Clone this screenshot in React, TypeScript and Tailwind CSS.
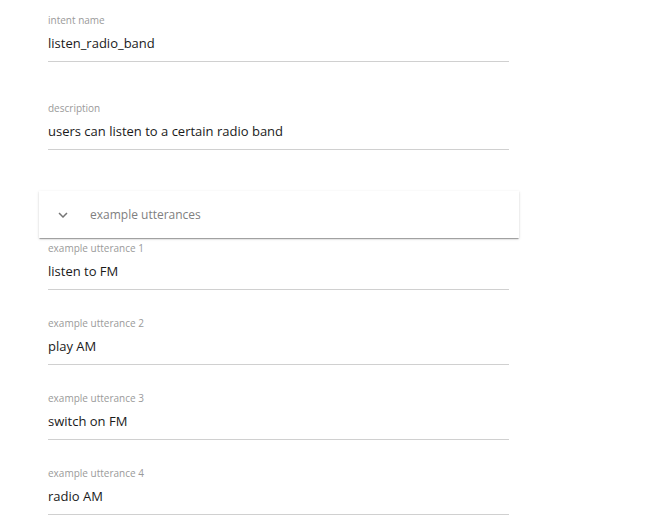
const FONT = "font-['Open_Sans',sans-serif]"

interface FieldProps {
  label: string
  value: string
  className?: string
}

function Field({ label, value, className }: FieldProps) {
  return (
    <div className={`ml-[9px] w-[461px] border-b border-[#d0d0d0] pb-[9px] ${className ?? ''}`}>
      <div className="text-[10px] leading-[14px] text-[#9a9a9a]">{label}</div>
      <div className="mt-[7px] text-[13px] leading-[18px] text-[#1a1a1a]">{value}</div>
    </div>
  )
}

function ExpandMore() {
  return (
    <svg width="18" height="18" viewBox="0 0 24 24" fill="#757575">
      <path d="M16.59 8.59L12 13.17 7.41 8.59 6 10l6 6 6-6z" />
    </svg>
  )
}

const utterances = ['listen to FM', 'play AM', 'switch on FM', 'radio AM']

export default function App() {
  return (
    <div className={`w-[656px] h-[524px] bg-white overflow-hidden ${FONT}`}>
      <div className="ml-[39px] w-[480px] pt-[13px] flex flex-col">
        <Field label="intent name" value="listen_radio_band" />
        <Field label="description" value="users can listen to a certain radio band" className="mt-[39px]" />
        <div className="mt-[41px] h-[47px] flex items-center bg-white shadow-[0_2px_1px_-1px_rgba(0,0,0,0.2),0_1px_1px_0_rgba(0,0,0,0.14),0_1px_3px_0_rgba(0,0,0,0.12)]">
          <div className="ml-[15px] flex items-center">
            <ExpandMore />
          </div>
          <span className="ml-[18px] text-[12px] text-[#808080]">example utterances</span>
        </div>
        <div className="mt-[3px] flex flex-col gap-[26px]">
          {utterances.map((u, i) => (
            <Field key={u} label={`example utterance ${i + 1}`} value={u} />
          ))}
        </div>
      </div>
    </div>
  )
}
